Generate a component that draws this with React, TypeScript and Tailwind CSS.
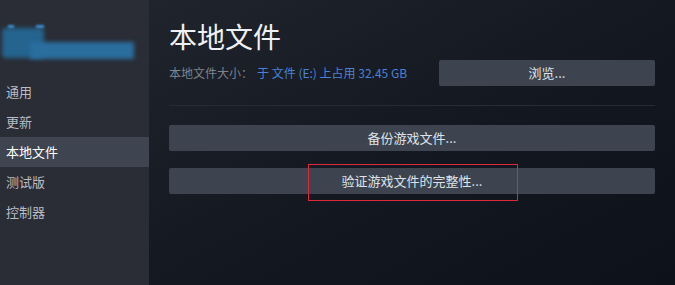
import React from "react";

const navItems = ["通用", "更新", "本地文件", "测试版", "控制器"];

function Sidebar() {
  return (
    <div className="flex w-[149px] shrink-0 flex-col bg-[#2a2d35]">
      {/* blurred game logo */}
      <div className="relative h-[77px]">
        <div className="absolute left-[2px] top-[28px] h-[30px] w-[42px] rounded-[4px] bg-[#24648f] blur-[2px]" />
        <div className="absolute left-[30px] top-[42px] h-[17px] w-[104px] bg-[#2a6e9e] blur-[2px]" />
        <div className="absolute left-[8px] top-[25px] h-[3px] w-[6px] bg-[#3d8fd0] blur-[1px]" />
        <div className="absolute left-[36px] top-[25px] h-[3px] w-[8px] bg-[#3d8fd0] blur-[1px]" />
      </div>
      <nav className="flex flex-col">
        {navItems.map((item) => (
          <div
            key={item}
            className={
              item === "本地文件"
                ? "flex h-[30px] items-center bg-[#3e4450] pl-[6px] text-[13px] text-white"
                : "flex h-[30px] items-center pl-[6px] text-[13px] text-[#b8bcc4]"
            }
          >
            {item}
          </div>
        ))}
      </nav>
    </div>
  );
}

function ActionButton({ label }: { label: string }) {
  return (
    <button className="flex h-[26px] w-full items-center justify-center rounded-[2px] bg-[#3d4450] text-[13px] text-[#dfe3e8]">
      {label}
    </button>
  );
}

export default function App() {
  return (
    <div
      className="flex h-[285px] w-[675px] overflow-hidden"
      style={{ fontFamily: '"Noto Sans CJK SC", "Noto Sans", sans-serif' }}
    >
      <Sidebar />
      <main className="flex flex-1 flex-col bg-gradient-to-br from-[#20242d] via-[#131821] to-[#0d121a] pl-[20px] pr-[20px]">
        <h1 className="mt-[17px] text-[28px] leading-[38px] text-[#eef0f3]">本地文件</h1>
        <div className="mt-[5px] flex items-center">
          <div className="flex w-[270px] items-center text-[12px]">
            <span className="text-[#7c838c]">本地文件大小：</span>
            <span className="ml-[4px] text-[#4a82d8]">于 文件 (E:) 上占用 32.45 GB</span>
          </div>
          <div className="w-[216px]">
            <ActionButton label="浏览..." />
          </div>
        </div>
        <div className="mt-[19px] h-px bg-[#262b34]" />
        <div className="mt-[19px] flex flex-col gap-[17px]">
          <ActionButton label="备份游戏文件..." />
          <div className="relative">
            <ActionButton label="验证游戏文件的完整性..." />
            <div className="pointer-events-none absolute left-[139px] top-[-4px] h-[37px] w-[210px] border border-[#e0283a]" />
          </div>
        </div>
      </main>
    </div>
  );
}
